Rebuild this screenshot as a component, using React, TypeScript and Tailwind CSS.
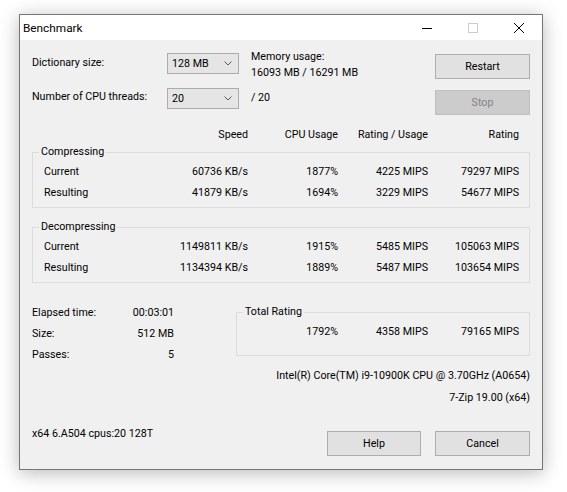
import React from "react";

function Combo({ value }: { value: string }) {
  return (
    <div className="h-[21px] w-[72px] border border-[#acacac] bg-[#e5e5e5] flex items-center pl-[4px] pr-[6px]">
      <span className="flex-1">{value}</span>
      <svg width="8" height="5" viewBox="0 0 8 5" className="block">
        <path d="M0.5 0.5 L4 4 L7.5 0.5" fill="none" stroke="#5a5a5a" strokeWidth="1" />
      </svg>
    </div>
  );
}

function Btn({ label, disabled, className = "" }: { label: string; disabled?: boolean; className?: string }) {
  return (
    <div
      className={
        "h-[25px] flex items-center justify-center border " +
        (disabled ? "bg-[#cccccc] border-[#bfbfbf] text-[#838383] " : "bg-[#e1e1e1] border-[#adadad] text-black ") +
        className
      }
    >
      {label}
    </div>
  );
}

function Group({ title, children, className = "" }: { title: string; children: React.ReactNode; className?: string }) {
  return (
    <div className={"relative border border-[#dcdcdc] " + className}>
      <span className="absolute left-[6px] top-[-9px] px-[2px] bg-[#f0f0f0] leading-[16px]">{title}</span>
      {children}
    </div>
  );
}

function DataRow({ label, v }: { label: string; v: string[] }) {
  return (
    <div className="h-[21px] flex items-center">
      <div className="w-[114px]">{label}</div>
      <div className="w-[90px] text-right">{v[0]}</div>
      <div className="w-[90px] text-right">{v[1]}</div>
      <div className="w-[90px] text-right">{v[2]}</div>
      <div className="w-[91px] text-right">{v[3]}</div>
    </div>
  );
}

export default function App() {
  return (
    <div className="w-[567px] h-[492px] bg-white pt-[14px] pl-[19px] overflow-hidden [font-family:Roboto,'Liberation_Sans',sans-serif] text-black">
      <div className="w-[524px] h-[456px] border border-[#767676] flex flex-col shadow-[0_3px_18px_rgba(0,0,0,0.28)]">
        {/* Title bar */}
        <div className="h-[25px] bg-white flex items-center">
          <div className="flex-1 pl-[3px] text-[11.8px] leading-[16px] pt-[1px]">Benchmark</div>
          <div className="w-[46px] h-[25px] flex items-center justify-center">
            <svg width="10" height="10" viewBox="0 0 10 10" className="block">
              <path d="M0 5.5 H10" stroke="#000" strokeWidth="1" />
            </svg>
          </div>
          <div className="w-[46px] h-[25px] flex items-center justify-center">
            <svg width="10" height="10" viewBox="0 0 10 10" className="block">
              <rect x="0.5" y="0.5" width="9" height="9" fill="none" stroke="#cccccc" strokeWidth="1" />
            </svg>
          </div>
          <div className="w-[46px] h-[25px] flex items-center justify-center">
            <svg width="10" height="10" viewBox="0 0 10 10" className="block">
              <path d="M0 0 L10 10 M10 0 L0 10" stroke="#000" strokeWidth="1" />
            </svg>
          </div>
        </div>

        {/* Body */}
        <div className="flex-1 bg-[#f0f0f0] pl-[12px] pr-[12px] pt-[13px] flex flex-col text-[10.7px] leading-[16px]">
          {/* Top controls */}
          <div className="flex h-[62px]">
            <div className="w-[135px] flex flex-col">
              <div className="mt-[2px]">Dictionary size:</div>
              <div className="mt-[18px]">Number of CPU threads:</div>
            </div>
            <div className="w-[72px] flex flex-col">
              <Combo value="128 MB" />
              <div className="mt-[14px]">
                <Combo value="20" />
              </div>
            </div>
            <div className="ml-[12px] flex-1 flex flex-col">
              <div className="mt-[-4px]">Memory usage:</div>
              <div>16093 MB / 16291 MB</div>
              <div className="mt-[9px]">/ 20</div>
            </div>
            <div className="w-[95px] flex flex-col">
              <Btn label="Restart" className="mt-[1px]" />
              <Btn label="Stop" disabled className="mt-[11px]" />
            </div>
          </div>

          {/* Column headers */}
          <div className="mt-[12px] flex h-[16px]">
            <div className="w-[126px]" />
            <div className="w-[90px] text-right">Speed</div>
            <div className="w-[90px] text-right">CPU Usage</div>
            <div className="w-[90px] text-right">Rating / Usage</div>
            <div className="w-[91px] text-right">Rating</div>
          </div>

          <Group title="Compressing" className="mt-[9px] pt-[8px] pb-[4px] pl-[11px]">
            <DataRow label="Current" v={["60736 KB/s", "1877%", "4225 MIPS", "79297 MIPS"]} />
            <DataRow label="Resulting" v={["41879 KB/s", "1694%", "3229 MIPS", "54677 MIPS"]} />
          </Group>

          <Group title="Decompressing" className="mt-[19px] pt-[8px] pb-[4px] pl-[11px]">
            <DataRow label="Current" v={["1149811 KB/s", "1915%", "5485 MIPS", "105063 MIPS"]} />
            <DataRow label="Resulting" v={["1134394 KB/s", "1889%", "5487 MIPS", "103654 MIPS"]} />
          </Group>

          {/* Bottom section */}
          <div className="flex">
            <div className="w-[142px] pt-[19px] flex flex-col">
              <div className="h-[21px] flex items-center justify-between">
                <span>Elapsed time:</span>
                <span>00:03:01</span>
              </div>
              <div className="h-[21px] flex items-center justify-between">
                <span>Size:</span>
                <span>512 MB</span>
              </div>
              <div className="h-[21px] flex items-center justify-between">
                <span>Passes:</span>
                <span>5</span>
              </div>
            </div>
            <div className="ml-[62px] w-[294px] pt-[29px] flex flex-col">
              <Group title="Total Rating" className="pt-[8px] pb-[13px]">
                <div className="h-[21px] flex items-center">
                  <div className="w-[101px] text-right">1792%</div>
                  <div className="w-[90px] text-right">4358 MIPS</div>
                  <div className="w-[91px] text-right">79165 MIPS</div>
                </div>
              </Group>
              <div className="mt-[12px] text-right">Intel(R) Core(TM) i9-10900K CPU @ 3.70GHz (A0654)</div>
              <div className="mt-[6px] text-right">7-Zip 19.00 (x64)</div>
            </div>
          </div>

          {/* Footer */}
          <div className="mt-[20px] flex items-start">
            <div className="flex-1">x64 6.A504 cpus:20 128T</div>
            <Btn label="Help" className="w-[94px] mt-[5px]" />
            <Btn label="Cancel" className="w-[95px] ml-[14px] mt-[5px]" />
          </div>
        </div>
      </div>
    </div>
  );
}
